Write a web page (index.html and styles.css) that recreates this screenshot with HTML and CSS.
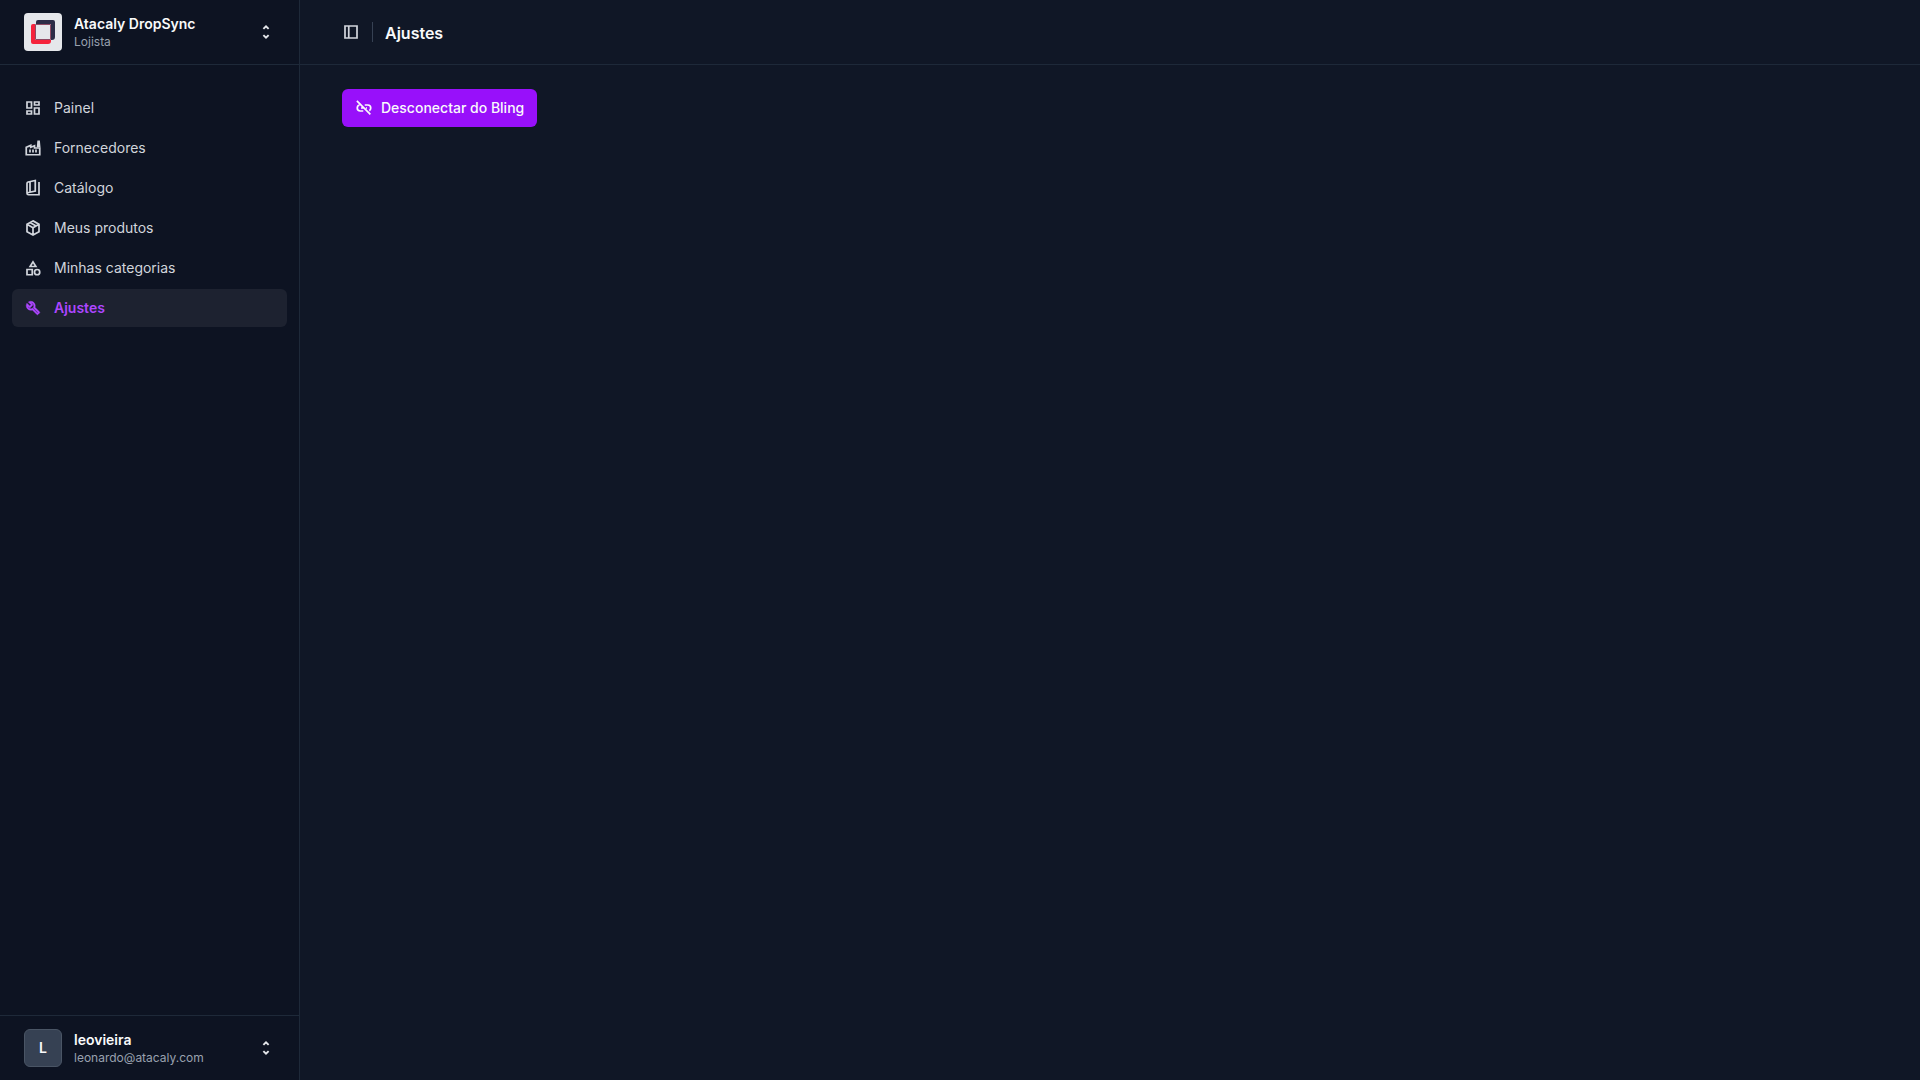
FILE: index.html
```html
<!DOCTYPE html>
<html lang="pt-BR">
<head>
<meta charset="utf-8">
<meta name="viewport" content="width=device-width, initial-scale=1">
<title>Ajustes</title>
<link rel="stylesheet" href="styles.css">
</head>
<body>
<div class="app">
  <aside class="sidebar">
    <button class="account" type="button">
      <svg class="logo" viewBox="0 0 38 38" aria-hidden="true">
        <rect width="38" height="38" rx="4" fill="#e5e7eb"/>
        <path fill="#2c2c47" d="M12 11V9q0-2 2-2h15q2 0 2 2v15q0 3-3 3h-1V11z"/>
        <path fill="#f5233c" d="M9 11h2v16h16v1q0 3-3 3H9q-2 0-2-2V13q0-2 2-2z"/>
        <path fill="none" stroke="#8f4b64" d="M11.500 26.500v-15h15v15z"/>
      </svg>
      <span class="account-text"><strong>Atacaly DropSync</strong><small>Lojista</small></span>
      <svg class="chevrons" viewBox="0 0 24 24" aria-hidden="true"><path d="M8.500 7.800 12 4.300l3.500 3.500M8.500 16.200 12 19.700l3.500-3.500"/></svg>
    </button>
    <nav class="nav">
      <a class="item" href="#painel">
        <svg class="icon" viewBox="0 0 24 24" aria-hidden="true"><path d="M4 4h6v8H4zM14 4h6v4h-6zM14 12h6v8h-6zM4 16h6v4H4z"/></svg>
        Painel</a>
      <a class="item" href="#fornecedores">
        <svg class="icon" viewBox="0 0 24 24" aria-hidden="true"><path d="M3 21V11l6-2.500V11l5-2v3h7v9zM8 14v4M12 14v4M16 14v4"/><path class="solid" d="m17 11 .8-9h3.400L22 11z"/></svg>
        Fornecedores</a>
      <a class="item" href="#catalogo">
        <svg class="icon" viewBox="0 0 24 24" aria-hidden="true"><path d="M20 4v17H6q-2 0-2-2V6q0-1.500 1.500-2L15 2v14l-9 2q-2 .4-2 1.500M8 4v13"/></svg>
        Catálogo</a>
      <a class="item" href="#produtos">
        <svg class="icon" viewBox="0 0 24 24" aria-hidden="true"><path d="m12 2.500 8 4.500v10l-8 4.500L4 17V7zM4 7l8 4.700L20 7M12 12v9M8 4.800l8 4.600"/></svg>
        Meus produtos</a>
      <a class="item" href="#categorias">
        <svg class="icon" viewBox="0 0 24 24" aria-hidden="true"><path d="m12 3.800 3.800 6.200H8.200zM4 14h7v7H4z"/><circle cx="17.500" cy="17.500" r="3.500"/></svg>
        Minhas categorias</a>
      <a class="item active" href="#ajustes" aria-current="page">
        <svg class="icon" viewBox="0 -960 960 960" aria-hidden="true"><path class="wrench" d="M686-132 444-376q-20 8-40.500 12t-43.500 4q-100 0-170-70t-70-170q0-36 10-68.500t28-61.500l146 146 72-72-146-146q29-18 61.500-28t68.500-10q100 0 170 70t70 170q0 23-4 43.500T584-516l244 242q12 12 12 29t-12 29l-84 84q-12 12-29 12t-29-12Zm29-85 27-27-256-256q18-20 26-46.500t8-53.500q0-60-38.500-104.500T386-758l74 74q12 12 12 28t-12 28L332-500q-12 12-28 12t-28-12l-74-74q9 57 53.500 95.500T360-440q26 0 53-8t47-26l255 257Z"/></svg>
        Ajustes</a>
    </nav>
    <button class="account user" type="button">
      <span class="avatar">L</span>
      <span class="account-text"><strong>leovieira</strong><small>leonardo@atacaly.com</small></span>
      <svg class="chevrons" viewBox="0 0 24 24" aria-hidden="true"><path d="M8.500 7.800 12 4.300l3.500 3.500M8.500 16.200 12 19.700l3.500-3.500"/></svg>
    </button>
  </aside>
  <div class="page">
    <header class="topbar">
      <button class="toggle" type="button" aria-label="Alternar barra lateral">
        <svg class="icon" viewBox="0 0 24 24" aria-hidden="true"><path d="M4 4h16v16H4zM9 4v16"/></svg>
      </button>
      <span class="divider"></span>
      <h1>Ajustes</h1>
    </header>
    <main class="content">
      <button class="primary" type="button">
        <svg class="icon" viewBox="0 0 24 24" aria-hidden="true"><path d="M11 16H7q-4 0-4-4 0-3.200 3-4M13 8h4q4 0 4 4 0 2.500-2 3.500M8 12h4M14.500 12H16M2.500 2.500l18 18"/></svg>
        Desconectar do Bling</button>
    </main>
  </div>
</div>
</body>
</html>
```
FILE: styles.css
```css
* { box-sizing: border-box; }
body {
  margin: 0;
  background: #101726;
  color: #f9fafb;
  font: 14px/20px Inter, sans-serif;
}
button { border: 0; margin: 0; background: none; color: inherit; font: inherit; cursor: pointer; }
svg { flex: none; }
.app { display: flex; min-height: 100vh; }
.sidebar {
  display: flex;
  flex-direction: column;
  flex: none;
  width: 300px;
  background: #0d1322;
  border-right: 1px solid #1e2939;
}
.account {
  display: flex;
  align-items: center;
  gap: 12px;
  height: 65px;
  padding: 0 24px;
  border-bottom: 1px solid #1e2939;
  text-align: left;
}
.account.user { border-top: 1px solid #1e2939; border-bottom: 0; }
.logo, .avatar { width: 38px; height: 38px; flex: none; }
.avatar {
  display: grid;
  place-items: center;
  border: 1px solid #4a5565;
  border-radius: 6px;
  background: #364153;
  font-weight: 600;
}
.account-text { display: flex; flex-direction: column; flex: 1; padding-top: 2px; }
.account-text strong { font-weight: 600; line-height: 18px; }
.account-text small { color: #99a1af; font-size: 12px; line-height: 18px; }
.chevrons {
  width: 18px;
  height: 18px;
  fill: none;
  stroke: #e5e7eb;
  stroke-width: 2.500;
}
.nav { display: flex; flex-direction: column; flex: 1; gap: 2px; padding: 24px 12px; }
.item {
  display: flex;
  align-items: center;
  gap: 12px;
  height: 38px;
  padding: 0 12px;
  border-radius: 6px;
  color: #d1d5dc;
  text-decoration: none;
}
.item.active { background: #1d2230; color: #ad46ff; font-weight: 600; }
.icon { width: 18px; height: 18px; fill: none; stroke: currentColor; stroke-width: 2.300; }
.icon .solid { fill: currentColor; stroke: none; }
.icon .wrench { fill: currentColor; stroke-width: 24; }
.page { display: flex; flex-direction: column; flex: 1; min-width: 0; }
.topbar {
  display: flex;
  align-items: center;
  gap: 12px;
  height: 65px;
  padding: 0 42px;
  border-bottom: 1px solid #1e2939;
}
.toggle { display: flex; padding: 0; color: #d1d5dc; }
.divider { width: 1px; height: 20px; background: #364153; }
h1 { margin: 0; padding-top: 2px; font-size: 16px; line-height: 24px; font-weight: 600; }
.content { padding: 24px 42px; }
.primary {
  display: flex;
  align-items: center;
  gap: 8px;
  height: 38px;
  padding: 0 13px;
  border-radius: 6px;
  background: #9810fa;
  color: #f9fafb;
  font-weight: 500;
}
```
